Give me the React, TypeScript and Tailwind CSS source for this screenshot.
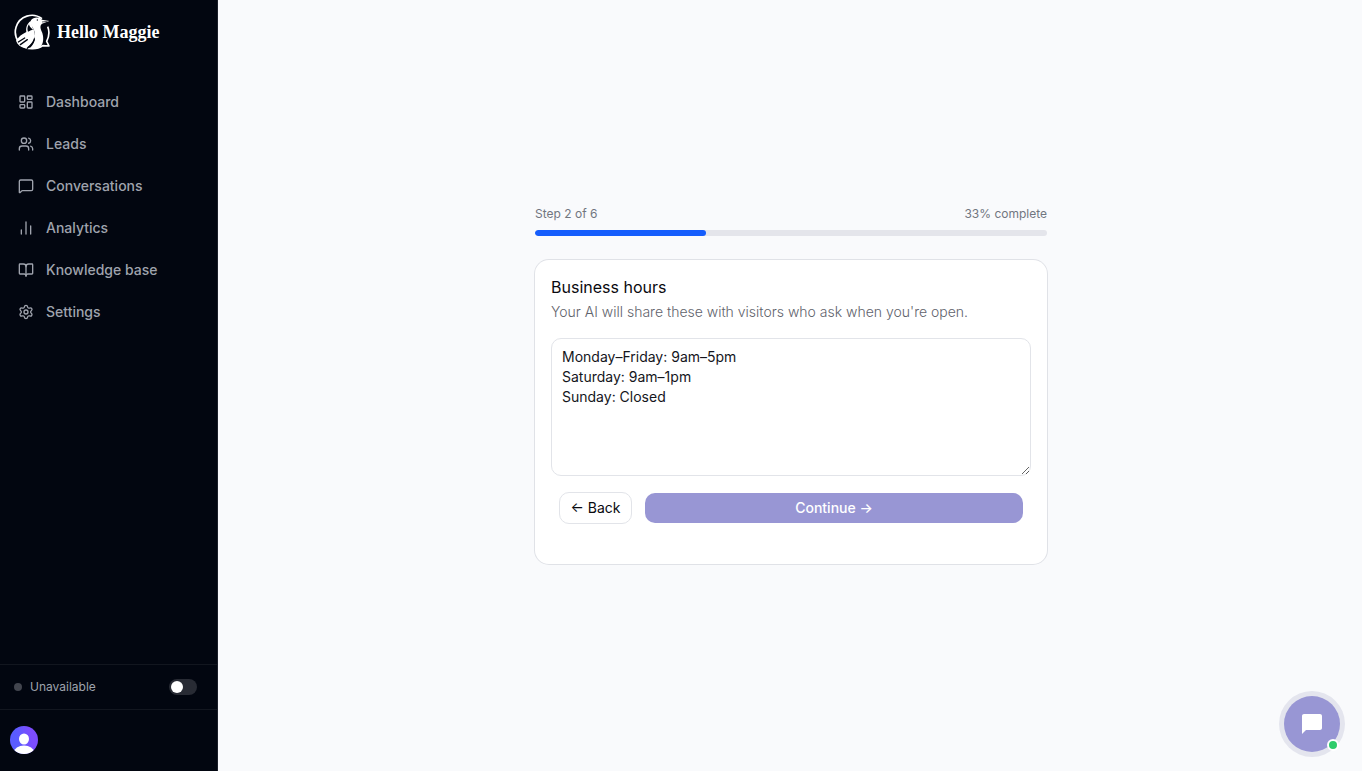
import { useState } from "react";
import {
  BookOpen,
  ChartNoAxesColumn,
  LayoutDashboard,
  MessageSquare,
  Settings,
  Users,
  type LucideIcon,
} from "lucide-react";

interface INavItem {
  label: string;
  icon: LucideIcon;
}

const navItems: INavItem[] = [
  { label: "Dashboard", icon: LayoutDashboard },
  { label: "Leads", icon: Users },
  { label: "Conversations", icon: MessageSquare },
  { label: "Analytics", icon: ChartNoAxesColumn },
  { label: "Knowledge base", icon: BookOpen },
  { label: "Settings", icon: Settings },
];

// magpie inside a speech bubble
const logo = (
  <svg width={36} height={36} viewBox="0 0 108 108" fill="none" aria-hidden="true">
    <path
      d="M84 14A50 50 0 1 0 56 104C67 104 78 101 86 95L105 96L98 82C105 68 107 52 101 38"
      stroke="#fff"
      strokeWidth={5}
      strokeLinejoin="round"
    />
    <path
      d="M106 21L84 17C77 8 58 8 51 19C47 27 53 36 58 44C62 52 64 58 60 66C66 76 60 90 46 104C60 107 74 104 82 95C89 85 89 70 85 57C81 46 75 37 84 29Z"
      fill="#fff"
    />
    <path
      d="M50 21C39 29 35 41 37 54C24 60 14 68 6 80C10 92 20 100 34 103C46 98 58 86 61 76C64 62 62 50 56 42Z"
      fill="#fff"
    />
    <path d="M45 31C40 38 39 46 42 53C49 49 53 47 57 47C50 42 46 37 45 31Z" fill="#020610" />
    <path
      d="M13 84L32 72M19 92L40 77M61 75C58 87 50 95 40 103"
      stroke="#020610"
      strokeWidth={4}
      strokeLinecap="round"
    />
    <path d="M84 24L100 22" stroke="#020610" strokeWidth={2} />
    <circle cx={70} cy={18} r={2} fill="#020610" />
  </svg>
);

function Sidebar() {
  const [available, setAvailable] = useState(false);

  return (
    <aside className="flex w-[218px] shrink-0 flex-col border-r border-[#1b1f29] bg-[#020610] text-[#9fa3ad]">
      <div className="flex h-16 items-center gap-[7px] px-3.5">
        {logo}
        <span className="font-['Liberation_Serif',serif] text-[18px] font-bold text-white">
          Hello Maggie
        </span>
      </div>

      <nav className="flex flex-col gap-0.5 px-2 pt-[18px]">
        {navItems.map(({ label, icon: Icon }) => (
          <a
            key={label}
            href="#"
            className="flex h-10 items-center gap-3 rounded-lg px-2.5 text-sm font-medium hover:bg-white/5"
          >
            <Icon size={16} strokeWidth={2} />
            {label}
          </a>
        ))}
      </nav>

      <div className="mt-auto flex h-[45px] items-center gap-2 border-t border-[#12161f] pr-5 pl-3.5">
        <span className="size-2 rounded-full bg-[#42454e]" />
        <label htmlFor="availability" className="text-xs">
          {available ? "Available" : "Unavailable"}
        </label>
        <input
          id="availability"
          type="checkbox"
          role="switch"
          checked={available}
          onChange={(e) => setAvailable(e.currentTarget.checked)}
          className="ml-auto flex h-4 w-7 cursor-pointer appearance-none items-center rounded-full bg-[#282b34] px-0.5 before:size-3 before:rounded-full before:bg-white checked:justify-end checked:bg-green-500"
        />
      </div>

      <div className="flex h-[62px] items-start border-t border-[#12161f] px-2.5 pt-4">
        <button type="button" aria-label="Account" className="size-7 overflow-hidden rounded-full">
          <svg width={28} height={28} viewBox="0 0 28 28">
            <defs>
              <linearGradient id="avatar" x1="0" y1="0.5" x2="1" y2="0.3">
                <stop offset="0.25" stopColor="#5a5cff" />
                <stop offset="0.75" stopColor="#7d4dff" />
              </linearGradient>
            </defs>
            <rect width={28} height={28} fill="url(#avatar)" />
            <ellipse cx={14} cy={13} rx={5} ry={5.5} fill="#fff" />
            <ellipse cx={14} cy={26} rx={10} ry={6.5} fill="#fff" />
          </svg>
        </button>
      </div>
    </aside>
  );
}

function Progress({ step, total }: { step: number; total: number }) {
  const percent = Math.round((step / total) * 100);

  return (
    <div className="flex flex-col gap-2">
      <div className="flex justify-between text-xs text-[#717680]">
        <span>
          Step {step} of {total}
        </span>
        <span>{percent}% complete</span>
      </div>
      <div className="h-1.5 overflow-hidden rounded-full bg-[#e4e5eb]">
        <div
          className="h-full rounded-full bg-[#155dfc]"
          style={{ width: `${(step / total) * 100}%` }}
        />
      </div>
    </div>
  );
}

export default function App() {
  const [hours, setHours] = useState(
    "Monday–Friday: 9am–5pm\nSaturday: 9am–1pm\nSunday: Closed"
  );

  return (
    <div className="flex min-h-screen bg-[#f9fafc] font-['Inter',sans-serif]">
      <Sidebar />

      <main className="flex flex-1 flex-col items-center justify-center pt-6 pr-6 pb-[26px] pl-[26px]">
        <div className="flex w-full max-w-lg flex-col gap-6">
          <Progress step={2} total={6} />

          <section className="rounded-[14px] bg-white px-4 pt-4 pb-10 ring-1 ring-[#e0e2e7]">
            <h1 className="text-base/[22px] text-[#0a0a0f]">Business hours</h1>
            <label htmlFor="hours" className="mt-1 block text-sm font-light text-[#5f636c]">
              Your AI will share these with visitors who ask when you're open.
            </label>
            <textarea
              id="hours"
              rows={6}
              value={hours}
              onChange={(e) => setHours(e.currentTarget.value)}
              className="mt-4 block w-full rounded-[10px] border border-[#e2e4e9] px-2.5 py-2 text-sm text-[#15161c] outline-none focus:border-[#9896d4]"
            />
            <div className="mt-4 flex items-center gap-[13px] px-2">
              <button
                type="button"
                className="h-8 w-[73px] rounded-[10px] border border-[#e2e4e9] text-sm whitespace-nowrap text-[#0a0a0f]"
              >
                ← Back
              </button>
              <button
                type="button"
                className="h-[30px] flex-1 rounded-[10px] bg-[#9896d4] text-sm font-medium text-white"
              >
                Continue →
              </button>
            </div>
          </section>
        </div>
      </main>

      <button
        type="button"
        aria-label="Open chat"
        className="fixed right-[22px] bottom-[19px] flex size-14 items-center justify-center rounded-full bg-[#9896d4] ring-5 ring-[#e4e5ee]"
      >
        <svg width={24} height={24} viewBox="0 0 24 24" fill="#fff">
          <path d="M20 2H4c-1.100 0-2 .9-2 2v18l4-4h14c1.100 0 2-.9 2-2V4c0-1.100-.9-2-2-2z" />
        </svg>
        <span className="absolute right-px bottom-px size-3 rounded-full border-2 border-white bg-[#2ecc6b]" />
      </button>
    </div>
  );
}
